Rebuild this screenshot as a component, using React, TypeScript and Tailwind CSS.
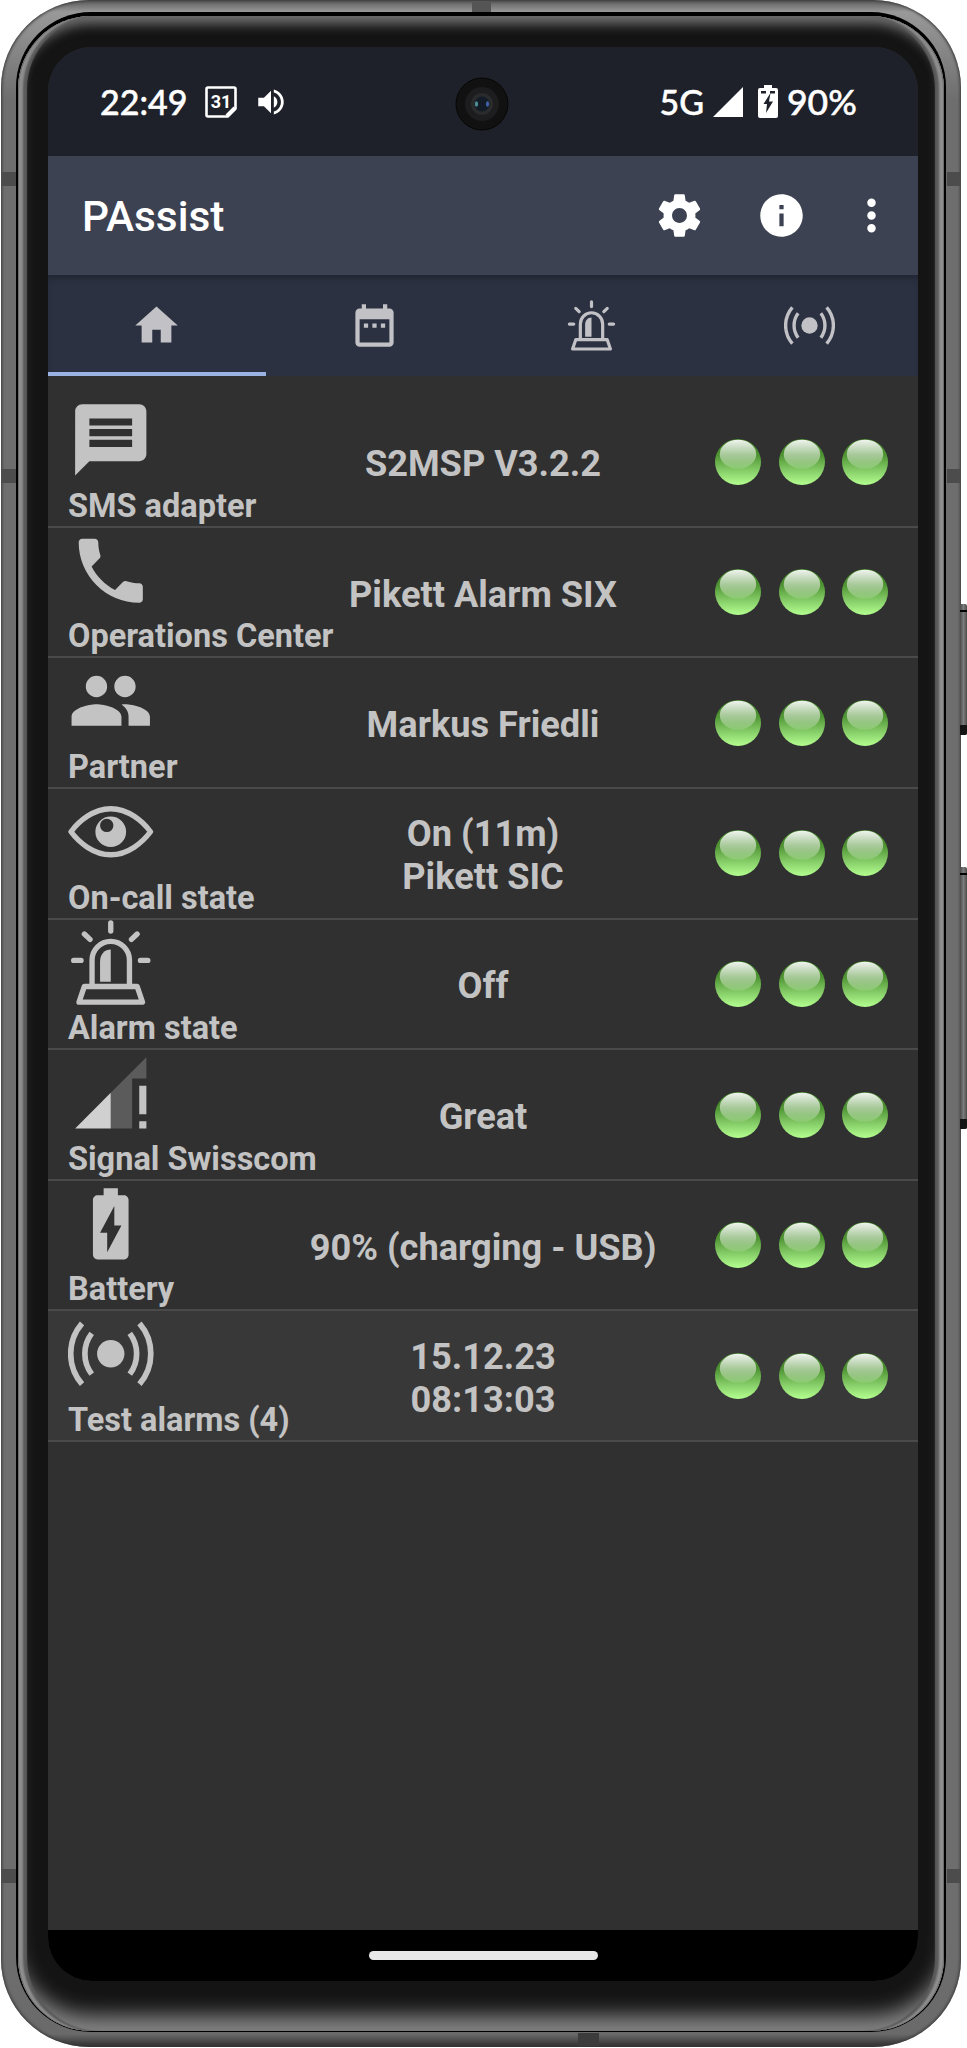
import type { ReactNode } from "react";

type IconProps = { className?: string };

function Material({ d, className }: { d: string; className?: string }) {
  return (
    <svg viewBox="0 0 24 24" fill="currentColor" className={className}>
      <path d={d} />
    </svg>
  );
}

const paths = {
  message:
    "M20 2H4c-1.1 0-1.99.9-1.99 2L2 22l4-4h14c1.1 0 2-.9 2-2V4c0-1.1-.9-2-2-2zm-2 12H6v-2h12v2zm0-3H6V9h12v2zm0-3H6V6h12v2z",
  call: "M6.62 10.79c1.44 2.83 3.76 5.14 6.59 6.59l2.2-2.2c.27-.27.67-.36 1.02-.24 1.12.37 2.33.57 3.57.57.55 0 1 .45 1 1V20c0 .55-.45 1-1 1-9.39 0-17-7.61-17-17 0-.55.45-1 1-1h3.5c.55 0 1 .45 1 1 0 1.25.2 2.45.57 3.57.11.35.03.74-.25 1.02l-2.2 2.2z",
  people:
    "M16 11c1.66 0 2.99-1.34 2.99-3S17.66 5 16 5c-1.66 0-3 1.34-3 3s1.34 3 3 3zm-8 0c1.66 0 2.99-1.34 2.99-3S9.66 5 8 5C6.34 5 5 6.34 5 8s1.34 3 3 3zm0 2c-2.33 0-7 1.17-7 3.5V19h14v-2.5c0-2.33-4.67-3.5-7-3.5zm8 0c-.29 0-.62.02-.97.05 1.16.84 1.97 1.97 1.97 3.45V19h6v-2.5c0-2.33-4.67-3.5-7-3.5z",
  battery:
    "M15.67 4H14V2h-4v2H8.33C7.6 4 7 4.6 7 5.33v15.33C7 21.4 7.6 22 8.33 22h7.33c.74 0 1.34-.6 1.34-1.33V5.33C17 4.6 16.4 4 15.67 4zM11 20v-5.5H9L13 7v5.5h2L11 20z",
  home: "M10 20v-6h4v6h5v-8h3L12 3 2 12h3v8z",
  calendar:
    "M9 11H7v2h2v-2zm4 0h-2v2h2v-2zm4 0h-2v2h2v-2zm2-7h-1V2h-2v2H8V2H6v2H5c-1.11 0-1.99.9-1.99 2L3 20c0 1.1.89 2 2 2h14c1.1 0 2-.9 2-2V6c0-1.1-.9-2-2-2zm0 16H5V9h14v11z",
  settings:
    "M19.43 12.98c.04-.32.07-.64.07-.98s-.03-.66-.07-.98l2.11-1.65c.19-.15.24-.42.12-.64l-2-3.46c-.12-.22-.39-.3-.61-.22l-2.49 1c-.52-.4-1.08-.73-1.69-.98l-.38-2.65C14.46 2.18 14.25 2 14 2h-4c-.25 0-.46.18-.49.42l-.38 2.65c-.61.25-1.17.59-1.69.98l-2.49-1c-.23-.09-.49 0-.61.22l-2 3.46c-.13.22-.07.49.12.64l2.11 1.65c-.04.32-.07.65-.07.98s.03.66.07.98l-2.11 1.65c-.19.15-.24.42-.12.64l2 3.46c.12.22.39.3.61.22l2.49-1c.52.4 1.08.73 1.69.98l.38 2.65c.03.24.24.42.49.42h4c.25 0 .46-.18.49-.42l.38-2.65c.61-.25 1.17-.59 1.69-.98l2.49 1c.23.09.49 0 .61-.22l2-3.46c.12-.22.07-.49-.12-.64l-2.11-1.65zM12 15.5c-1.93 0-3.5-1.57-3.5-3.5s1.57-3.5 3.5-3.5 3.5 1.57 3.5 3.5-1.57 3.5-3.5 3.5z",
  info: "M12 2C6.48 2 2 6.48 2 12s4.48 10 10 10 10-4.48 10-10S17.52 2 12 2zm1 15h-2v-6h2v6zm0-8h-2V7h2v2z",
  more: "M12 8c1.1 0 2-.9 2-2s-.9-2-2-2-2 .9-2 2 .9 2 2 2zm0 2c-1.1 0-2 .9-2 2s.9 2 2 2 2-.9 2-2-.9-2-2-2zm0 6c-1.1 0-2 .9-2 2s.9 2 2 2 2-.9 2-2-.9-2-2-2z",
  volume:
    "M3 9v6h4l5 5V4L7 9H3zm13.5 3c0-1.77-1.02-3.29-2.5-4.03v8.05c1.48-.73 2.5-2.25 2.5-4.02zM14 3.23v2.06c2.89.86 5 3.54 5 6.71s-2.11 5.85-5 6.71v2.06c4.01-.91 7-4.49 7-8.77s-2.99-7.86-7-8.77z",
};

function Siren({ className }: IconProps) {
  return (
    <svg viewBox="0 0 256 256" fill="none" stroke="currentColor" strokeWidth="16" strokeLinecap="round" strokeLinejoin="round" className={className}>
      <path d="M128 9V33M49 42L66 58M207 42L190 58M17 121H39M217 121H239" />
      <path d="M72 196V120a56 56 0 0 1 112 0V196M49 199H207L223 246H33Z" />
      <path d="M96 185V124c0-22 14-36 32-36V185Z" fill="currentColor" stroke="none" />
    </svg>
  );
}

function Broadcast({ className }: IconProps) {
  return (
    <svg viewBox="0 0 256 256" fill="none" stroke="currentColor" strokeWidth="17" className={className}>
      <circle cx="128" cy="128" r="41" fill="currentColor" stroke="none" />
      <path d="M42 37A139 139 0 0 0 42 219M214 37A139 139 0 0 1 214 219M71 67A101 101 0 0 0 71 189M185 67A101 101 0 0 1 185 189" />
    </svg>
  );
}

function Eye({ className }: IconProps) {
  return (
    <svg viewBox="0 0 256 256" className={className}>
      <path d="M9 128C32 97 76 59 128 59S224 97 247 128C224 159 180 197 128 197S32 159 9 128Z" fill="none" stroke="currentColor" strokeWidth="16" strokeLinejoin="round" />
      <path fillRule="evenodd" fill="currentColor" d="M128 82a46 46 0 1 0 0 92a46 46 0 1 0 0-92ZM116 89a20 20 0 1 1 0 40a20 20 0 1 1 0-40Z" />
    </svg>
  );
}

function Signal({ className }: IconProps) {
  return (
    <svg viewBox="0 0 24 24" className={className}>
      <path d="M12 12L22 2V8H18V22H12Z" fill="#5b5b5b" />
      <path d="M2 22L12 12V22Z" fill="#d0d0d0" />
      <path d="M20 10h2v8h-2zM20 20h2v2h-2z" fill="#c3c3c3" />
    </svg>
  );
}

function Led() {
  return (
    <svg viewBox="0 0 46 46" className="size-[46px]">
      <defs>
        <linearGradient id="ledBody" x1="0" y1="0" x2="0" y2="1">
          <stop offset="0" stopColor="#3d7d24" />
          <stop offset="0.35" stopColor="#4f9433" />
          <stop offset="0.65" stopColor="#80c763" />
          <stop offset="1" stopColor="#b4ff90" />
        </linearGradient>
        <linearGradient id="ledGloss" x1="0" y1="0" x2="0" y2="1">
          <stop offset="0" stopColor="#fff" stopOpacity="0.92" />
          <stop offset="1" stopColor="#fff" stopOpacity="0.12" />
        </linearGradient>
      </defs>
      <circle cx="23" cy="23" r="23" fill="url(#ledBody)" />
      <ellipse cx="23" cy="15.2" rx="18.2" ry="14.4" fill="url(#ledGloss)" />
    </svg>
  );
}

const iconSize = "size-[85.5px] shrink-0";

const rows: { icon: ReactNode; label: string; value: string[]; active?: boolean }[] = [
  { icon: <Material d={paths.message} className={iconSize} />, label: "SMS adapter", value: ["S2MSP V3.2.2"] },
  { icon: <Material d={paths.call} className={iconSize} />, label: "Operations Center", value: ["Pikett Alarm SIX"] },
  { icon: <Material d={paths.people} className={iconSize} />, label: "Partner", value: ["Markus Friedli"] },
  { icon: <Eye className={iconSize} />, label: "On-call state", value: ["On (11m)", "Pikett SIC"] },
  { icon: <Siren className={iconSize} />, label: "Alarm state", value: ["Off"] },
  { icon: <Signal className={iconSize} />, label: "Signal Swisscom", value: ["Great"] },
  { icon: <Material d={paths.battery} className={iconSize} />, label: "Battery", value: ["90% (charging - USB)"] },
  { icon: <Broadcast className={iconSize} />, label: "Test alarms (4)", value: ["15.12.23", "08:13:03"], active: true },
];

function StatusBar() {
  return (
    <div className="flex h-[109px] shrink-0 items-center bg-[#1f212a] pl-[52px] pr-[60px] font-['Lato',sans-serif] text-[34px] font-medium leading-none text-white [-webkit-text-stroke:0.5px_white]">
      <span className="w-[85px] whitespace-nowrap">22:49</span>
      <svg viewBox="0 0 32 32" className="ml-5 size-8">
        <path d="M3 1.5H29Q30.5 1.5 30.5 3V22.5L22.5 30.5H3Q1.5 30.5 1.5 29V3Q1.5 1.5 3 1.5Z" fill="none" stroke="white" strokeWidth="2.6" />
        <path d="M22 30L30 22" stroke="white" strokeWidth="4" />
        <text x="16" y="22" textAnchor="middle" fontSize="18" fontWeight="700" fill="white" stroke="none" className="[-webkit-text-stroke:0]" fontFamily="Roboto, sans-serif">31</text>
      </svg>
      <Material d={paths.volume} className="ml-[17px] size-[34px]" />
      <span className="ml-auto">5G</span>
      <svg viewBox="0 0 30 30" className="ml-[9px] size-[30px]">
        <path d="M0 30L30 0V30Z" fill="white" />
      </svg>
      <svg viewBox="0 0 20 33" className="ml-[15px] h-[33px] w-5">
        <path fillRule="evenodd" fill="white" d="M6 0H14V3H18Q20 3 20 5V31Q20 33 18 33H2Q0 33 0 31V5Q0 3 2 3H6ZM3 6V8.500H8V6ZM12 6V8.500H17V6ZM12.500 8L5.500 19H9L8 28L15 16.500H11Z" />
      </svg>
      <span className="ml-[9px] w-[71px] whitespace-nowrap text-[35.5px]">90%</span>
    </div>
  );
}

function Screen() {
  return (
    <div className="flex h-[1934px] w-[870px] shrink-0 flex-col overflow-hidden rounded-[44px] bg-[#303030] font-['Roboto',sans-serif]">
      <StatusBar />
      <header className="flex h-[119px] shrink-0 items-center bg-[#3d4252] pl-[34px] text-white">
        <h1 className="grow pt-[4px] text-[42.4px] font-medium leading-none">PAssist</h1>
        <Material d={paths.settings} className="size-[51px]" />
        <Material d={paths.info} className="ml-[51px] size-[51px]" />
        <Material d={paths.more} className="ml-[39px] mr-[21px] size-[51px]" />
      </header>
      <nav className="grid h-[101px] shrink-0 grid-cols-4 bg-[#2c3141] text-[#c1c1c6] shadow-[inset_0_6px_8px_-4px_rgba(0,0,0,0.3)]">
        <div className="flex items-center justify-center border-b-4 border-[#9ab3e2] pt-1">
          <Material d={paths.home} className="size-[51px]" />
        </div>
        <div className="flex items-center justify-center">
          <Material d={paths.calendar} className="size-[51px]" />
        </div>
        <div className="flex items-center justify-center">
          <Siren className="size-[51px]" />
        </div>
        <div className="flex items-center justify-center">
          <Broadcast className="size-[51px]" />
        </div>
      </nav>
      <main className="grow pt-[21.3px] font-bold text-[#c3c3c3]">
        {rows.map((row) => (
          <section
            key={row.label}
            className={`grid h-[130.6px] grid-cols-[220px_430px_220px] border-b-[2.5px] border-[#4a4a4a] ${row.active ? "bg-[#383838]" : ""}`}
          >
            <div className="flex flex-col pl-5">
              {row.icon}
              <span className="mt-[4px] whitespace-nowrap text-[32.5px] leading-[38px]">{row.label}</span>
            </div>
            <div className="flex flex-col items-center justify-center whitespace-nowrap pt-[4px] text-[36.2px] leading-[43px]">
              {row.value.map((line) => (
                <span key={line}>{line}</span>
              ))}
            </div>
            <div className="flex items-center gap-[17.6px] pl-[17px]">
              <Led />
              <Led />
              <Led />
            </div>
          </section>
        ))}
      </main>
      <footer className="flex h-[51px] shrink-0 items-center justify-center bg-black">
        <div className="h-[9px] w-[229px] rounded-full bg-[#e8e8e8]" />
      </footer>
    </div>
  );
}

function SideButton({ className }: IconProps) {
  return (
    <div className={`absolute left-[960px] flex w-[7px] flex-col overflow-hidden rounded-r-[2px] bg-linear-to-r from-[#4a4a4a] via-[#7c7c7c] to-[#4c4c4c] ${className}`}>
      <div className="mt-[6px] h-[2px] bg-black" />
      <div className="mt-auto h-[10px] bg-[#141414]" />
    </div>
  );
}

export default function App() {
  return (
    <div className="relative h-[2048px] w-[967px] overflow-hidden bg-white pl-px">
      <div className="h-[2047px] w-[960px] rounded-[88px] bg-[linear-gradient(to_bottom,#5a5a5a_0px,#999999_12px,#6e6e6e_100px,#6e6e6e_1950px,#6a6a6a_2034px,#2e2e2e_2047px)] px-[15px] pb-[15px] pt-[12px] shadow-[inset_0_0_3px_1px_#3a3a3a]">
        <div className="h-full rounded-[75px] bg-black px-[2px] pb-[1.5px] pt-[4px]">
          <div className="flex h-full rounded-[73px] bg-[#141414] pl-[30px] pt-[31px] shadow-[inset_1px_0_0_#6c6c6c,inset_-1px_0_0_#6c6c6c,inset_6px_0_2px_-1px_#8e8e8e,inset_-6px_0_2px_-1px_#8e8e8e,inset_9px_0_1px_0px_#5a5a5a,inset_-9px_0_1px_0px_#5a5a5a,inset_0_10px_12px_-2px_#707070,inset_0_-20px_20px_-4px_#838383]">
            <Screen />
          </div>
        </div>
      </div>

      <div className="absolute left-px top-[172px] h-[14px] w-[15px] bg-[#4c4c4c]" />
      <div className="absolute left-px top-[469px] h-[14px] w-[15px] bg-[#4c4c4c]" />
      <div className="absolute left-px top-[1869px] h-[14px] w-[15px] bg-[#4c4c4c]" />
      <div className="absolute left-[947px] top-[172px] h-[14px] w-[14px] bg-[#4c4c4c]" />
      <div className="absolute left-[947px] top-[469px] h-[14px] w-[14px] bg-[#4c4c4c]" />
      <div className="absolute left-[947px] top-[1869px] h-[14px] w-[14px] bg-[#4c4c4c]" />
      <div className="absolute left-[472px] top-px h-[11px] w-[19px] bg-[#555555]" />
      <div className="absolute left-[578px] top-[2033px] h-[13px] w-[21px] bg-[#3c3c3c]" />

      <SideButton className="top-[604px] h-[131px]" />
      <SideButton className="top-[867px] h-[262px]" />

      <svg viewBox="0 0 54 54" className="absolute left-[455px] top-[77px] size-[54px]">
        <circle cx="27" cy="27" r="26" fill="#111" stroke="#060606" />
        <circle cx="27" cy="27" r="17" fill="#1d1d1f" />
        <circle cx="27" cy="27" r="11" fill="#2a2b2d" />
        <circle cx="27" cy="27" r="7.500" fill="#131c26" />
        <ellipse cx="21.500" cy="27" rx="1.600" ry="2.800" fill="#4d9298" />
        <ellipse cx="32.500" cy="27" rx="1.600" ry="2.800" fill="#4060a8" />
      </svg>
    </div>
  );
}
